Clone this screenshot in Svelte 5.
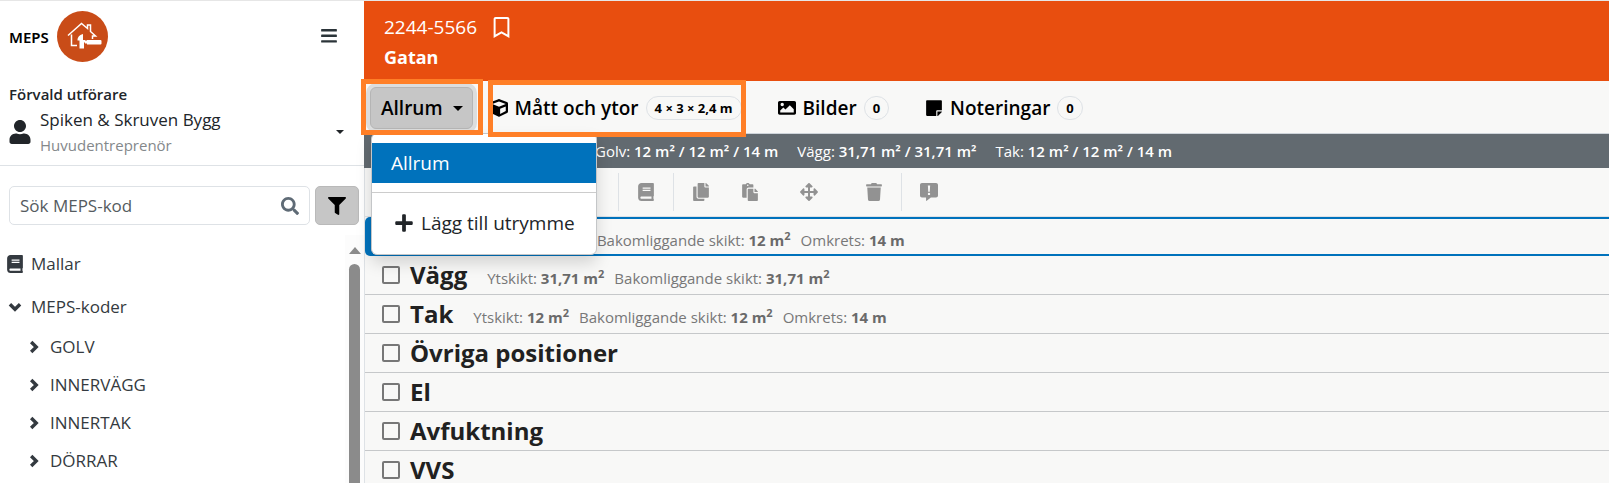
<script lang="ts">
  type Part = { label: string; value: string; squared?: boolean };
  type Section = { name: string; parts: Part[]; selected?: boolean };

  // solid icons, [viewBox, path]
  const icons: Record<string, [string, string]> = {
    bars: ['0 0 448 512', 'M16 98h416c9 0 16-7 16-16V46c0-9-7-16-16-16H16C7 30 0 37 0 46v36c0 9 7 16 16 16zm0 158h416c9 0 16-7 16-16v-36c0-9-7-16-16-16H16c-9 0-16 7-16 16v36c0 9 7 16 16 16zm0 158h416c9 0 16-7 16-16v-36c0-9-7-16-16-16H16c-9 0-16 7-16 16v36c0 9 7 16 16 16z'],
    user: ['0 0 448 512', 'M224 256c70.7 0 128-57.3 128-128S294.7 0 224 0 96 57.3 96 128s57.3 128 128 128zm89.6 32h-16.7c-22.2 10.2-46.9 16-72.9 16s-50.6-5.8-72.9-16h-16.7C60.2 288 0 348.2 0 422.4V464c0 26.5 21.5 48 48 48h352c26.5 0 48-21.5 48-48v-41.6c0-74.2-60.2-134.4-134.4-134.4z'],
    search: ['0 0 512 512', 'M505 442.7L405.3 343c-4.5-4.5-10.6-7-17-7H372c27.6-35.3 44-79.7 44-128C416 93.1 322.9 0 208 0S0 93.1 0 208s93.1 208 208 208c48.3 0 92.7-16.4 128-44v16.3c0 6.4 2.5 12.5 7 17l99.7 99.7c9.4 9.4 24.6 9.4 33.9 0l28.3-28.3c9.4-9.4 9.4-24.6.1-34zM208 336c-70.7 0-128-57.2-128-128 0-70.7 57.2-128 128-128 70.7 0 128 57.2 128 128 0 70.7-57.2 128-128 128z'],
    filter: ['0 0 512 512', 'M487.976 0H24.028C2.71 0-8.047 25.866 7.058 40.971L192 225.941V432c0 7.831 3.821 15.17 10.237 19.662l80 55.98C298.02 518.69 320 507.493 320 487.98V225.941l184.947-184.97C520.021 25.896 509.338 0 487.976 0z'],
    book: ['0 0 448 512', 'M448 360V24c0-13.3-10.7-24-24-24H96C43 0 0 43 0 96v320c0 53 43 96 96 96h328c13.3 0 24-10.7 24-24v-16c0-7.5-3.5-14.3-8.9-18.7-4.2-15.4-4.2-59.3 0-74.7 5.4-4.3 8.9-11.1 8.9-18.6zM128 134c0-3.3 2.7-6 6-6h212c3.3 0 6 2.7 6 6v20c0 3.3-2.7 6-6 6H134c-3.3 0-6-2.7-6-6v-20zm0 64c0-3.3 2.7-6 6-6h212c3.3 0 6 2.7 6 6v20c0 3.3-2.7 6-6 6H134c-3.3 0-6-2.7-6-6v-20zm253.4 250H96c-17.7 0-32-14.3-32-32 0-17.6 14.4-32 32-32h285.4c-1.9 17.1-1.9 46.9 0 64z'],
    bookmark: ['0 0 384 512', 'M336 0H48C21.49 0 0 21.49 0 48v464l192-112 192 112V48c0-26.51-21.49-48-48-48zm0 428.43l-144-84-144 84V54a6 6 0 0 1 6-6h276c3.314 0 6 2.683 6 5.996V428.43z'],
    cube: ['0 0 512 512', 'M239.1 6.3l-208 78c-18.7 7-31.1 25-31.1 45v225.1c0 18.2 10.3 34.8 26.5 42.9l208 104c13.5 6.8 29.4 6.8 42.9 0l208-104c16.3-8.1 26.5-24.8 26.5-42.9V129.3c0-20-12.4-37.9-31.1-44.9l-208-78C262 2.2 250 2.2 239.1 6.3zM256 68.4l192 72v1.1l-192 78-192-78v-1.1l192-72zm32 356V275.5l160-65v133.9l-160 80z'],
    plus: ['0 0 448 512', 'M416 208H272V64c0-17.67-14.33-32-32-32h-32c-17.67 0-32 14.33-32 32v144H32c-17.67 0-32 14.33-32 32v32c0 17.67 14.33 32 32 32h144v144c0 17.67 14.33 32 32 32h32c17.67 0 32-14.33 32-32V304h144c17.67 0 32-14.33 32-32v-32c0-17.67-14.33-32-32-32z'],
    image: ['0 0 512 512', 'M464 56H48C21 56 0 77 0 104v296c0 27 21 48 48 48h416c27 0 48-21 48-48V104c0-27-21-48-48-48zM120 110a48 48 0 1 1 0 96 48 48 0 0 1 0-96zM64 330l88-88 60 60 124-124 112 112v94H64z'],
    note: ['0 0 448 512', 'M312 320h136V56c0-13.3-10.7-24-24-24H24C10.7 32 0 42.7 0 56v400c0 13.3 10.7 24 24 24h264V344c0-13.2 10.8-24 24-24zm129 55l-98 98c-4.5 4.5-10.6 7-17 7h-6V352h128v6.1c0 6.3-2.5 12.4-7 16.9z'],
    copy: ['0 0 448 512', 'M320 448v40c0 13.255-10.745 24-24 24H24c-13.255 0-24-10.745-24-24V120c0-13.255 10.745-24 24-24h72v296c0 30.879 25.121 56 56 56h168zm0-344V0H152c-13.255 0-24 10.745-24 24v368c0 13.255 10.745 24 24 24h272c13.255 0 24-10.745 24-24V128H344c-13.2 0-24-10.8-24-24zm120.971-31.029L375.029 7.029A24 24 0 0 0 358.059 0H352v96h96v-6.059a24 24 0 0 0-7.029-16.97z'],
    paste: ['0 0 448 512', 'M128 184c0-30.879 25.122-56 56-56h136V56c0-13.255-10.745-24-24-24h-80.61C204.306 12.89 183.637 0 160 0s-44.306 12.89-55.39 32H24C10.745 32 0 42.745 0 56v336c0 13.255 10.745 24 24 24h104V184zm32-144c13.255 0 24 10.745 24 24s-10.745 24-24 24-24-10.745-24-24 10.745-24 24-24zm184 248h104v200c0 13.255-10.745 24-24 24H184c-13.255 0-24-10.745-24-24V184c0-13.255 10.745-24 24-24h136v104c0 13.2 10.8 24 24 24zm104-38.059V256h-96v-96h6.059a24 24 0 0 1 16.97 7.029l65.941 65.941a24.002 24.002 0 0 1 7.03 16.971z'],
    move: ['0 0 512 512', 'M352.201 425.775l-79.196 79.196c-9.373 9.373-24.568 9.373-33.941 0l-79.196-79.196c-15.119-15.119-4.411-40.971 16.971-40.97H228V284H127.196v51.162c0 21.382-25.851 32.09-40.971 16.971L7.029 272.937c-9.373-9.373-9.373-24.569 0-33.941L86.225 159.8c15.119-15.119 40.971-4.411 40.971 16.971V228H228V127.196h-51.23c-21.382 0-32.09-25.851-16.971-40.971l79.196-79.196c9.373-9.373 24.568-9.373 33.941 0l79.196 79.196c15.119 15.119 4.411 40.971-16.971 40.971H284V228h100.804v-51.162c0-21.382 25.851-32.09 40.97-16.971l79.196 79.196c9.373 9.373 9.373 24.569 0 33.941L425.773 352.2c-15.119 15.119-40.971 4.411-40.97-16.971V284H284v100.804h51.23c21.382 0 32.09 25.851 16.971 40.971z'],
    trash: ['0 0 448 512', 'M432 32H312l-9.4-18.7A24 24 0 0 0 281.1 0H166.8a23.72 23.72 0 0 0-21.4 13.3L136 32H16A16 16 0 0 0 0 48v32a16 16 0 0 0 16 16h416a16 16 0 0 0 16-16V48a16 16 0 0 0-16-16zM53.2 467a48 48 0 0 0 47.9 45h245.8a48 48 0 0 0 47.9-45L416 128H32z'],
    alert: ['0 0 512 512', 'M56 0h400c31 0 56 25 56 56v300c0 31-25 56-56 56H310L190 508c-8 6-18 2-18-8v-88H56c-31 0-56-25-56-56V56C0 25 25 0 56 0zM224 72l10 176h44l10-176zM256 276a34 34 0 1 0 0 68 34 34 0 0 0 0-68z'],
  };

  const codes = ['GOLV', 'INNERVÄGG', 'INNERTAK', 'DÖRRAR'];

  const totals: Part[] = [
    { label: 'Golv:', value: '12 m² / 12 m² / 14 m' },
    { label: 'Vägg:', value: '31,71 m² / 31,71 m²' },
    { label: 'Tak:', value: '12 m² / 12 m² / 14 m' },
  ];

  const floorParts: Part[] = [
    { label: 'Ytskikt:', value: '12 m', squared: true },
    { label: 'Bakomliggande skikt:', value: '12 m', squared: true },
    { label: 'Omkrets:', value: '14 m' },
  ];

  const sections: Section[] = [
    { name: 'Golv', parts: floorParts, selected: true },
    {
      name: 'Vägg',
      parts: [
        { label: 'Ytskikt:', value: '31,71 m', squared: true },
        { label: 'Bakomliggande skikt:', value: '31,71 m', squared: true },
      ],
    },
    { name: 'Tak', parts: floorParts },
    { name: 'Övriga positioner', parts: [] },
    { name: 'El', parts: [] },
    { name: 'Avfuktning', parts: [] },
    { name: 'VVS', parts: [] },
  ];

  let menuOpen = $state(true);
  let search = $state('');
</script>

{#snippet icon(name: string, size: string)}
  <svg class="icon {size}" viewBox={icons[name][0]} aria-hidden="true">
    <path d={icons[name][1]} fill="currentColor" fill-rule="evenodd" />
  </svg>
{/snippet}

<div class="app">
  <aside class="sidebar">
    <div class="brand">
      <span class="brand-name">MEPS</span>
      <svg class="logo" viewBox="0 0 51 51" aria-hidden="true">
        <circle cx="25.5" cy="25.5" r="25.5" fill="#c94c18" />
        <path
          d="M20 34.500h-5.500V23.500M11 24.500L24.500 12.500l6 5V14h3v6.500l5 4.500h-3v3"
          fill="none" stroke="#fff" stroke-width="1.5"
        />
        <path d="M22.500 37.500v-8h-2c0-3 1.500-5.500 5.500-6.500v6h2v2.500h-1v6z" fill="#fff" />
        <path d="M28 29.500h2V29h13.500q1 0 1 1v2.500q0 1-1 1H30v-1h-2z" fill="#fff" />
      </svg>
      <button class="plain menu-button" aria-label="Meny">{@render icon('bars', 'md')}</button>
    </div>

    <div class="contractor">
      <div class="contractor-title">Förvald utförare</div>
      <button class="plain contractor-pick">
        {@render icon('user', 'lg')}
        <span class="contractor-text">
          <span class="contractor-name">Spiken &amp; Skruven Bygg</span>
          <span class="contractor-role">Huvudentreprenör</span>
        </span>
        <span class="caret small"></span>
      </button>
    </div>

    <div class="search-row">
      <label class="search">
        <input type="text" placeholder="Sök MEPS-kod" aria-label="Sök MEPS-kod" bind:value={search} />
        {@render icon('search', 'md')}
      </label>
      <button class="filter" aria-label="Filter">{@render icon('filter', 'md')}</button>
    </div>

    <div class="tree-wrap">
      <nav class="tree">
        <button class="plain node">{@render icon('book', 'md')}Mallar</button>
        <button class="plain node">
          <svg class="chevron" viewBox="0 0 16 16" aria-hidden="true"><path d="M3.500 5.500l4.500 4.500 4.500-4.500" /></svg>
          MEPS-koder
        </button>
        <div class="branch">
          {#each codes as code}
            <button class="plain leaf">
              <svg class="chevron" viewBox="0 0 16 16" aria-hidden="true"><path d="M5.500 3.500l4.500 4.500-4.500 4.500" /></svg>
              {code}
            </button>
          {/each}
        </div>
      </nav>
      <div class="scrollbar" aria-hidden="true">
        <span class="scroll-up"></span>
        <span class="scroll-thumb"></span>
      </div>
    </div>
  </aside>

  <main class="main">
    <header class="header">
      <div class="case">
        2244-5566
        <button class="plain" aria-label="Bokmärke">{@render icon('bookmark', 'bm')}</button>
      </div>
      <div class="street">Gatan</div>
    </header>

    <div class="tabs">
      <div class="room">
        <button class="room-button" aria-expanded={menuOpen} onclick={() => (menuOpen = !menuOpen)}>
          Allrum <span class="caret"></span>
        </button>
        {#if menuOpen}
          <div class="menu">
            <button class="plain menu-item active">Allrum</button>
            <hr />
            <button class="plain menu-item add">{@render icon('plus', 'plus')}Lägg till utrymme</button>
          </div>
        {/if}
        <span class="mark"></span>
      </div>
      <button class="plain tab measures">
        {@render icon('cube', 'md')}Mått och ytor<span class="badge">4 × 3 × 2,4 m</span>
        <span class="mark"></span>
      </button>
      <button class="plain tab">{@render icon('image', 'md')}Bilder<span class="badge">0</span></button>
      <button class="plain tab">{@render icon('note', 'md')}Noteringar<span class="badge">0</span></button>
    </div>

    <div class="totals">
      {#each totals as total}
        <span>{total.label} <b>{total.value}</b></span>
      {/each}
    </div>

    <div class="toolbar">
      <div class="group"><button class="plain" aria-label="Mallar">{@render icon('book', 'md')}</button></div>
      <div class="group edit">
        <button class="plain" aria-label="Kopiera">{@render icon('copy', 'md')}</button>
        <button class="plain" aria-label="Klistra in">{@render icon('paste', 'md')}</button>
        <button class="plain move" aria-label="Flytta">{@render icon('move', 'md')}</button>
        <button class="plain" aria-label="Ta bort">{@render icon('trash', 'md')}</button>
      </div>
      <div class="group"><button class="plain" aria-label="Kommentar">{@render icon('alert', 'md')}</button></div>
    </div>

    <div class="sections">
      {#each sections as section}
        <div class="section" class:selected={section.selected}>
          <label class="section-name">
            <input type="checkbox" />
            {section.name}
          </label>
          {#each section.parts as part}
            <span class="part">{part.label} <b>{part.value}{#if part.squared}<sup>2</sup>{/if}</b></span>
          {/each}
        </div>
      {/each}
    </div>
  </main>
</div>

<style>
  :global(body) {
    margin: 0;
  }

  .app,
  .app * {
    box-sizing: border-box;
  }

  .app {
    display: grid;
    grid-template-columns: 364px 1fr;
    height: 100vh;
    overflow: hidden;
    border-top: 1px solid #e6e6e6;
    background: #fff;
    color: #212529;
    font-family: 'Open Sans', 'Noto Sans', sans-serif;
    font-size: 17px;
    line-height: 24px;
  }

  button,
  input {
    font: inherit;
    color: inherit;
  }

  .plain {
    border: 0;
    padding: 0;
    background: none;
    display: flex;
    align-items: center;
    text-align: left;
    white-space: nowrap;
    cursor: pointer;
  }

  .icon {
    flex: none;
    display: block;
  }

  .md {
    width: 18px;
    height: 18px;
  }

  .lg {
    width: 22px;
    height: 24px;
  }

  .bm {
    width: 17px;
    height: 21px;
  }

  .plus {
    width: 18px;
    height: 20px;
  }

  .caret {
    flex: none;
    border: 5px solid transparent;
    border-top-color: currentColor;
    border-bottom: 0;
  }

  .caret.small {
    border-width: 4px 4px 0;
  }

  /* sidebar */
  .sidebar {
    display: flex;
    flex-direction: column;
    min-height: 0;
  }

  .brand {
    display: flex;
    align-items: center;
    gap: 8px;
    padding: 10px 26px 0 9px;
  }

  .brand-name {
    color: #000;
    font-family: 'Noto Sans', sans-serif;
    font-size: 15px;
    font-weight: 600;
  }

  .logo {
    width: 51px;
    height: 51px;
  }

  .menu-button {
    margin-left: auto;
    color: #2b3439;
  }

  .contractor {
    padding: 20px 20px 8px 9px;
    border-bottom: 1px solid #dee2e6;
  }

  .contractor-title {
    font-size: 15px;
    font-weight: 600;
  }

  .contractor-pick {
    width: 100%;
    gap: 9px;
  }

  .contractor-text {
    flex: 1;
    display: flex;
    flex-direction: column;
  }

  .contractor-name {
    line-height: 28px;
  }

  .contractor-role {
    color: #84888b;
    font-size: 15px;
    line-height: 23px;
  }

  .search-row {
    display: flex;
    gap: 5px;
    padding: 20px 5px 0 9px;
  }

  .search {
    flex: 1;
    display: flex;
    align-items: center;
    height: 39px;
    padding: 0 10px;
    border: 1px solid #dee2e6;
    border-radius: 5px;
    color: #5f6b76;
  }

  .search input {
    flex: 1;
    min-width: 0;
    border: 0;
    padding: 0;
    outline: 0;
    background: none;
  }

  .search input::placeholder {
    color: #555b60;
    opacity: 1;
  }

  .filter {
    width: 44px;
    height: 39px;
    display: grid;
    place-items: center;
    padding: 0;
    border: 1px solid #b9b9b9;
    border-radius: 5px;
    background: #c6c6c6;
    color: #000;
  }

  .tree-wrap {
    flex: 1;
    display: flex;
    min-height: 0;
    margin-top: 10px;
    overflow: hidden;
  }

  .tree {
    flex: 1;
    padding: 7px 0 0 6px;
    color: #343a40;
  }

  .node {
    height: 43px;
    gap: 7px;
  }

  .branch {
    padding-left: 19px;
  }

  .leaf {
    height: 38px;
    gap: 7px;
  }

  .chevron {
    width: 18px;
    height: 18px;
    fill: none;
    stroke: currentColor;
    stroke-width: 3;
  }

  .scrollbar {
    width: 19px;
    display: flex;
    flex-direction: column;
    align-items: center;
    gap: 10px;
    padding-top: 12px;
    background: #fcfcfc;
  }

  .scroll-up {
    border: 6px solid transparent;
    border-bottom: 7px solid #8b8b8b;
    border-top: 0;
  }

  .scroll-thumb {
    flex: 1;
    width: 11px;
    border-radius: 6px 6px 0 0;
    background: #8b8b8b;
  }

  /* main */
  .main {
    display: flex;
    flex-direction: column;
    min-width: 0;
    border-left: 1px solid #dee2e6;
    background: #f8f8f7;
  }

  .header {
    height: 80px;
    margin-left: -1px;
    padding: 10px 20px 0;
    background: #e84e0f;
    color: #fff;
    font-size: 19px;
    line-height: 32px;
  }

  .case {
    display: flex;
    align-items: center;
    gap: 16px;
  }

  .street {
    font-size: 18px;
    font-weight: 700;
    line-height: 28px;
  }

  .tabs {
    display: flex;
    align-items: center;
    height: 53px;
    padding: 2px 0 0 5px;
    border-bottom: 1px solid #ced4da;
    color: #000;
    font-size: 19px;
    font-weight: 600;
  }

  .room {
    position: relative;
    margin-right: 17px;
  }

  .room-button {
    display: flex;
    align-items: center;
    gap: 10px;
    height: 42px;
    padding: 0 9px 0 10px;
    border: 1px solid #b5b5b5;
    border-radius: 6px;
    background: #c6c6c6;
    box-shadow: 0 0 0 4px #dcdddd;
  }

  .mark {
    position: absolute;
    inset: -8px -10px -6px -9px;
    border: 5px solid #ff7f27;
    z-index: 3;
    pointer-events: none;
  }

  .tab {
    position: relative;
    height: 42px;
    gap: 7px;
    margin-right: 36px;
  }

  .measures .mark {
    inset: -7px -4px -8px -2px;
  }

  .badge {
    padding: 0 8px;
    border: 1px solid #dee2e6;
    border-radius: 12px;
    font-size: 13px;
    font-weight: 700;
    line-height: 22px;
  }

  .menu {
    position: absolute;
    top: 46px;
    left: 1px;
    z-index: 2;
    width: 226px;
    padding: 9px 0 1px;
    border: 1px solid #c4c6c8;
    border-radius: 6px;
    background: #fff;
    box-shadow: 0 8px 16px rgba(0, 0, 0, 0.15);
    color: #212529;
    font-size: 19px;
    font-weight: 400;
  }

  .menu-item {
    width: 100%;
    height: 40px;
    padding: 0 19px;
  }

  .menu-item.active {
    background: #0072bc;
    color: #fff;
  }

  .menu-item.add {
    height: 60px;
    padding: 0 23px;
    gap: 8px;
  }

  .menu hr {
    margin: 9px 0 0;
    border: 0;
    border-top: 1px solid #ccc;
  }

  .totals {
    display: flex;
    gap: 19px;
    height: 34px;
    margin-left: -1px;
    padding-left: 231px;
    background: #626a70;
    color: #fff;
    font-size: 15px;
    line-height: 34px;
    white-space: nowrap;
  }

  .totals b {
    font-weight: 600;
  }

  .toolbar {
    display: flex;
    height: 49px;
    padding: 5px 0 5px 253px;
    border-bottom: 1px solid #dee2e6;
    color: #929292;
  }

  .group {
    display: flex;
    align-items: center;
    padding: 0 18px;
    border-left: 1px solid #dee2e6;
  }

  .edit {
    gap: 31px;
  }

  .edit .move {
    margin: 0 16px 0 10px;
  }

  .section {
    display: flex;
    align-items: baseline;
    height: 39px;
    padding-left: 17px;
    border-bottom: 1px solid #c6c8ca;
    font-size: 15px;
    line-height: 38px;
    white-space: nowrap;
  }

  .section.selected {
    border: 2px solid #0072bc;
    border-width: 2px 0 2px 8px;
    border-radius: 5px 0 0 5px;
    line-height: 36px;
  }

  .section-name {
    display: flex;
    align-items: baseline;
    gap: 10px;
    margin-right: 20px;
    color: #212121;
    font-size: 24px;
    font-weight: 700;
  }

  .section-name input {
    appearance: none;
    width: 18px;
    height: 18px;
    margin: 0 0 4px;
    border: 2px solid #777;
    border-radius: 2px;
  }

  .part {
    margin-right: 10px;
    color: #777;
  }

  .part b {
    color: #6a6a6a;
    font-weight: 700;
  }

  .part sup {
    font-size: 11px;
    line-height: 0;
  }
</style>
